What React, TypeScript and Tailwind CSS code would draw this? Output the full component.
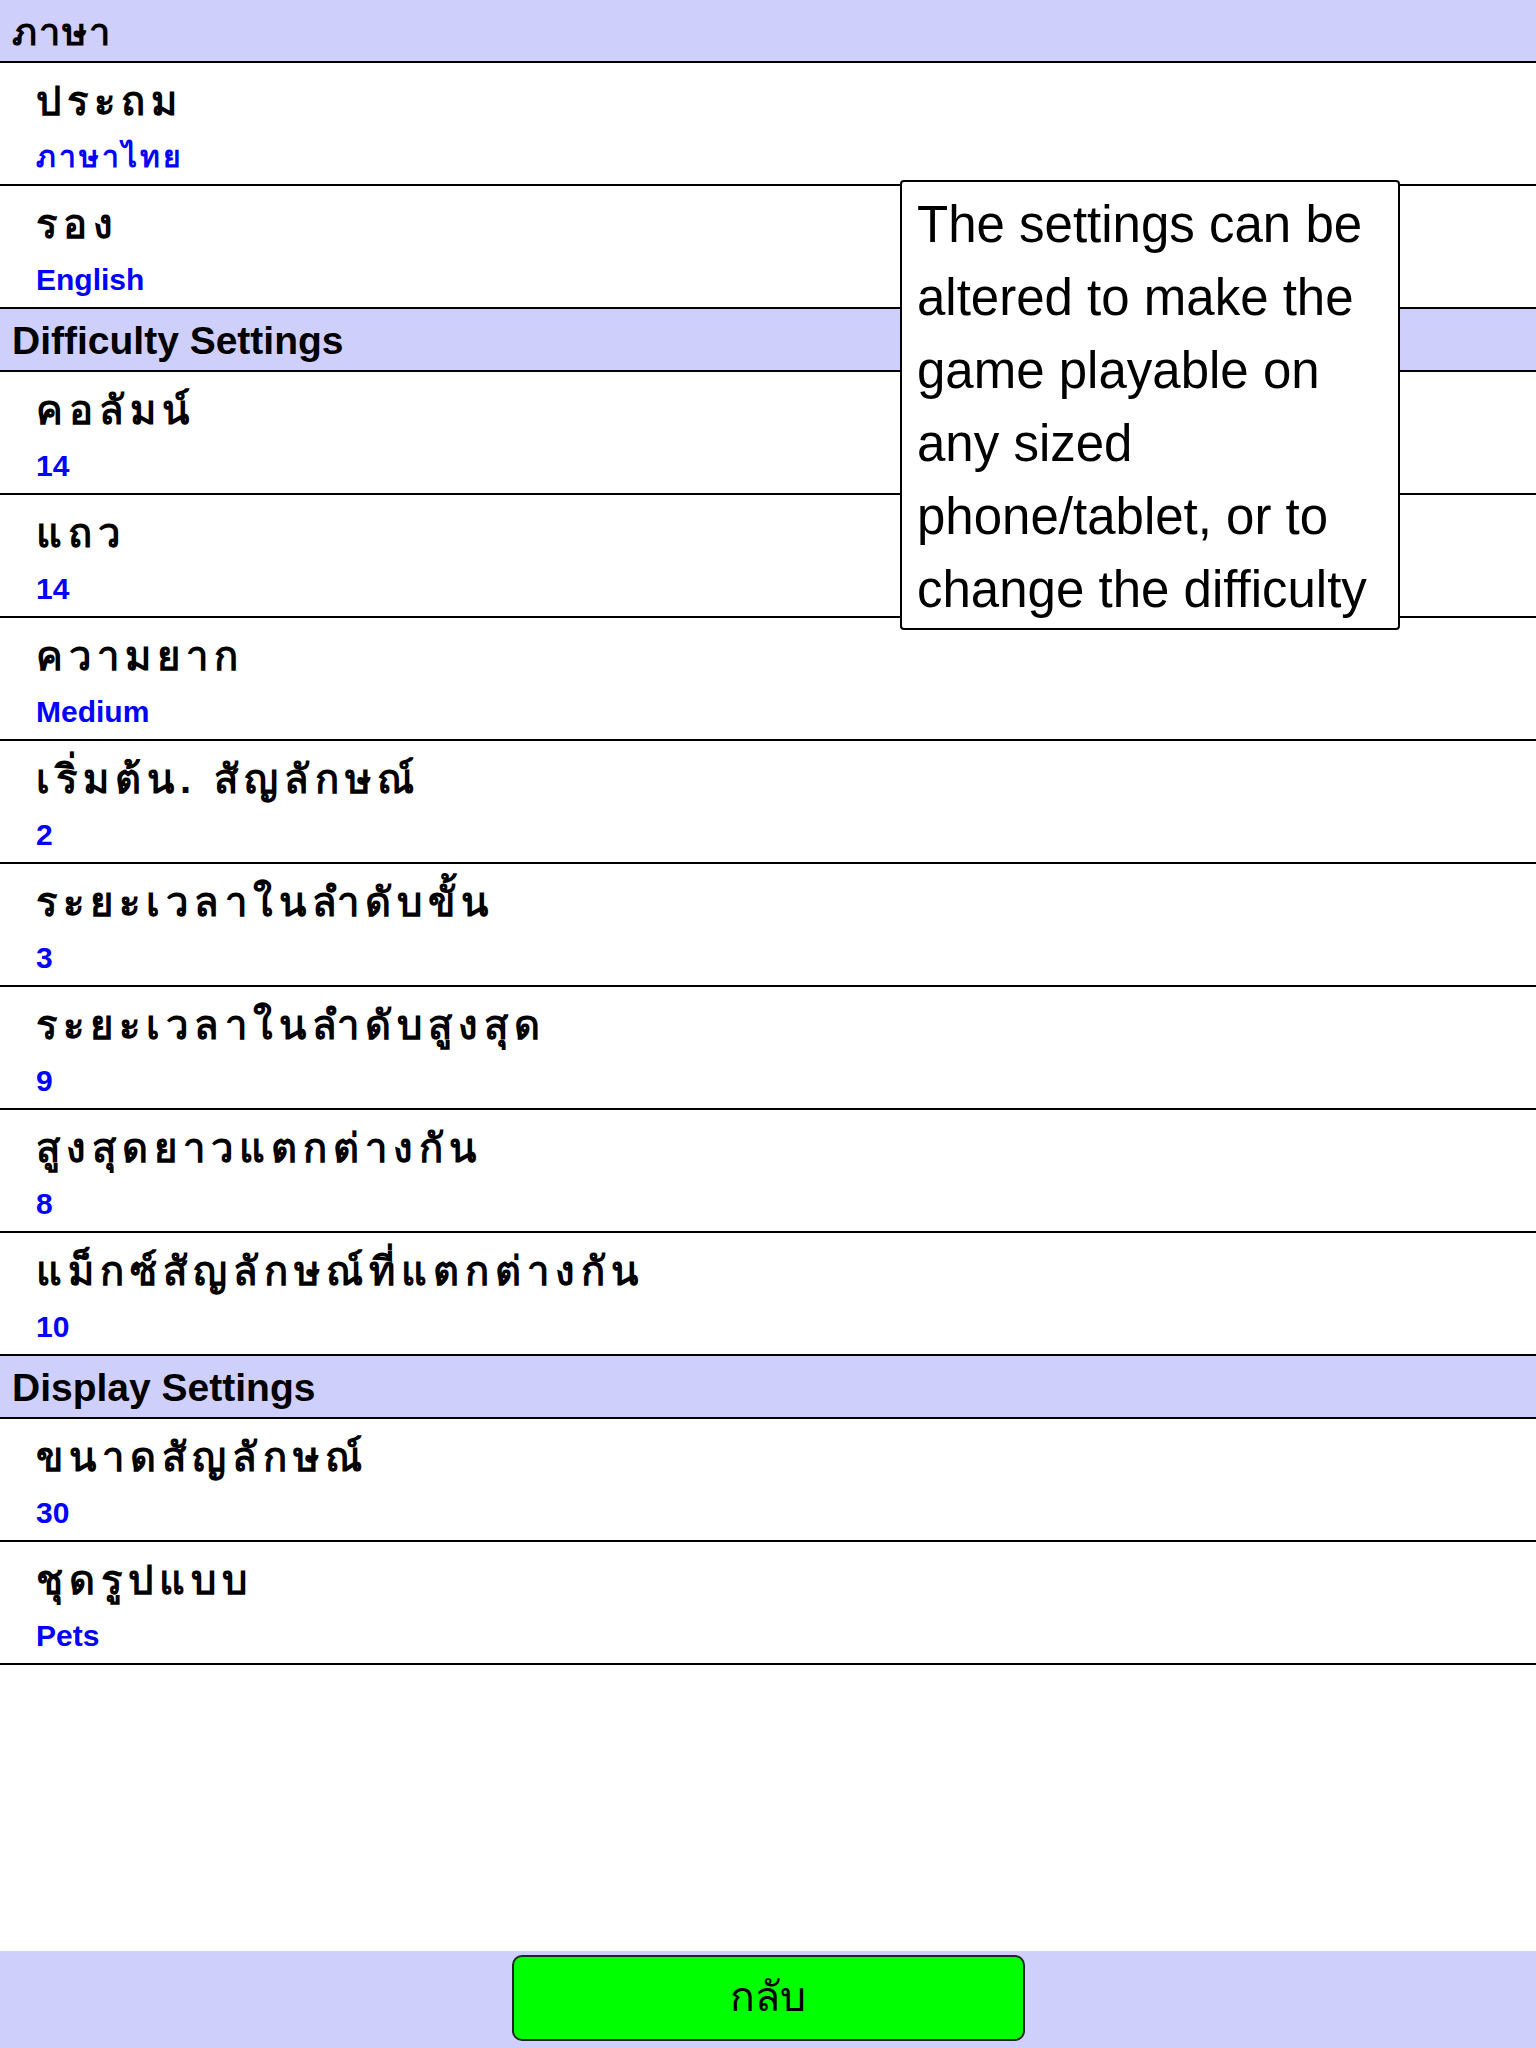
import React from "react";

type Row = { label: string; value: string };

const sections: { title: string; rows: Row[] }[] = [
  {
    title: "ภาษา",
    rows: [
      { label: "ประถม", value: "ภาษาไทย" },
      { label: "รอง", value: "English" },
    ],
  },
  {
    title: "Difficulty Settings",
    rows: [
      { label: "คอลัมน์", value: "14" },
      { label: "แถว", value: "14" },
      { label: "ความยาก", value: "Medium" },
      { label: "เริ่มต้น. สัญลักษณ์", value: "2" },
      { label: "ระยะเวลาในลำดับขั้น", value: "3" },
      { label: "ระยะเวลาในลำดับสูงสุด", value: "9" },
      { label: "สูงสุดยาวแตกต่างกัน", value: "8" },
      { label: "แม็กซ์สัญลักษณ์ที่แตกต่างกัน", value: "10" },
    ],
  },
  {
    title: "Display Settings",
    rows: [
      { label: "ขนาดสัญลักษณ์", value: "30" },
      { label: "ชุดรูปแบบ", value: "Pets" },
    ],
  },
];

// thai strings are drawn with wide spacing in the original
const isThai = (s: string) => /[\u0E00-\u0E7F]/.test(s);

function SettingRow({ label, value }: Row) {
  return (
    <div className="h-[123px] border-b-2 border-black pl-[36px] pt-[10px]">
      <div className="text-[40px] leading-[56px] font-bold tracking-[6px] text-black">{label}</div>
      <div
        className={
          isThai(value)
            ? "mt-[10px] text-[30px] leading-[36px] font-bold tracking-[3px] text-[#0000ff]"
            : "mt-[10px] text-[30px] leading-[36px] font-bold text-[#0000ff]"
        }
      >
        {value}
      </div>
    </div>
  );
}

export default function App() {
  return (
    <div
      className="relative w-[1536px] h-[2048px] bg-white flex flex-col"
      style={{ fontFamily: '"Liberation Sans", Arial, sans-serif' }}
    >
      <div className="flex-1">
        {sections.map((s) => (
          <div key={s.title}>
            <div
              className={
                isThai(s.title)
                  ? "h-[63px] border-b-2 border-black bg-[#cfcffc] pl-[12px] pt-[3px] flex items-center text-[38px] font-bold tracking-[2px] text-black"
                  : "h-[63px] border-b-2 border-black bg-[#cfcffc] pl-[12px] pt-[4px] flex items-center text-[39px] font-bold text-black"
              }
            >
              {s.title}
            </div>
            {s.rows.map((r) => (
              <SettingRow key={r.label} label={r.label} value={r.value} />
            ))}
          </div>
        ))}
      </div>

      <div className="h-[97px] bg-[#cfcffc] flex justify-center pt-[4px]">
        <button className="w-[513px] h-[86px] bg-[#00ff00] border-2 border-[#222] rounded-[10px] text-[41px] text-black">
          กลับ
        </button>
      </div>

      {/* hint bubble over the list */}
      <div className="absolute left-[900px] top-[180px] w-[500px] h-[450px] bg-white border-2 border-black rounded-[4px] pl-[15px] pt-[6px] text-[51px] leading-[73px] text-black">
        The settings can be altered to make the game playable on any sized phone/tablet, or to change the difficulty
      </div>
    </div>
  );
}
